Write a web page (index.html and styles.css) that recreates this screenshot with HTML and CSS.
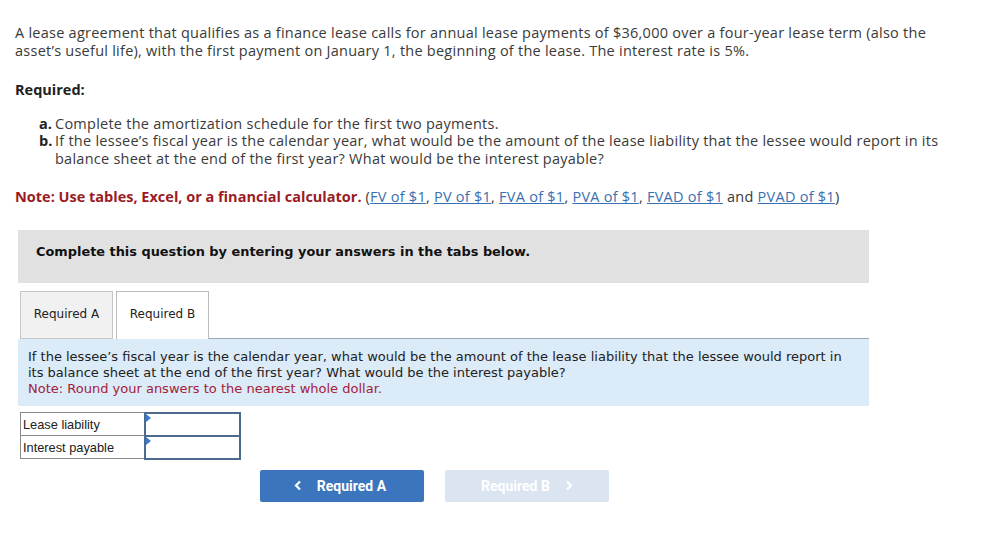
FILE: index.html
```html
<!DOCTYPE html>
<html>
<head>
<meta charset="utf-8">
<link rel="stylesheet" href="styles.css">
</head>
<body>
<div class="page">
  <p class="intro">A lease agreement that qualifies as a finance lease calls for annual lease payments of $36,000 over a four-year lease term (also the asset’s useful life), with the first payment on January 1, the beginning of the lease. The interest rate is 5%.</p>
  <p class="req-title">Required:</p>
  <ol class="req-list">
    <li><b>a.</b><span>Complete the amortization schedule for the first two payments.</span></li>
    <li><b>b.</b><span>If the lessee’s fiscal year is the calendar year, what would be the amount of the lease liability that the lessee would report in its balance sheet at the end of the first year? What would be the interest payable?</span></li>
  </ol>
  <p class="note"><b>Note: Use tables, Excel, or a financial calculator.</b> (<a href="#">FV of $1</a>, <a href="#">PV of $1</a>, <a href="#">FVA of $1</a>, <a href="#">PVA of $1</a>, <a href="#">FVAD of $1</a> and <a href="#">PVAD of $1</a>)</p>

  <div class="question">
    <div class="banner">Complete this question by entering your answers in the tabs below.</div>
    <div class="tabs">
      <div class="tab">Required A</div>
      <div class="tab active">Required B</div>
      <div class="tab-fill"></div>
    </div>
    <div class="prompt">
      <div>If the lessee’s fiscal year is the calendar year, what would be the amount of the lease liability that the lessee would report in its balance sheet at the end of the first year? What would be the interest payable?</div>
      <div class="prompt-note">Note: Round your answers to the nearest whole dollar.</div>
    </div>
    <table class="answers">
      <tr><td class="label">Lease liability</td><td class="input"><span class="flag"></span></td></tr>
      <tr><td class="label">Interest payable</td><td class="input"><span class="flag"></span></td></tr>
    </table>
    <div class="nav">
      <button class="btn prev"><svg width="8" height="11" viewBox="0 0 8 11"><path d="M6 1.5 L2 5.5 L6 9.5" fill="none" stroke="#fff" stroke-width="2.2"/></svg><span>Required A</span></button>
      <button class="btn next"><span>Required B</span><svg width="8" height="11" viewBox="0 0 8 11"><path d="M2 1.5 L6 5.5 L2 9.5" fill="none" stroke="#fff" stroke-width="2.2"/></svg></button>
    </div>
  </div>
</div>
</body>
</html>
```
FILE: styles.css
```css
html, body { margin: 0; padding: 0; background: #fff; }
.page {
  padding: 24px 0 0 15px;
  font-family: "Open Sans", "Lato", sans-serif;
  font-size: 14.5px;
  letter-spacing: 0.25px;
  color: #3a3a3a;
  width: 935px;
}
.intro { margin: 0; line-height: 17.5px; }
.req-title { margin: 22px 0 0; font-weight: bold; line-height: 17.5px; color: #222; letter-spacing: 0; }
.req-list { list-style: none; margin: 16px 0 0; padding: 0 0 0 24px; line-height: 17.5px; }
.req-list li { display: flex; }
.req-list b { width: 16px; flex: none; color: #222; letter-spacing: 0; }
.note { margin: 21px 0 0; line-height: 17.5px; }
.note b { color: #9b1b24; letter-spacing: 0; }
.note a { color: #3a6fb0; text-decoration: underline; }

.question { margin-top: 24px; margin-left: 3px; width: 851px; letter-spacing: 0; }
.banner {
  background: #e1e1e1;
  height: 53px;
  box-sizing: border-box;
  padding: 14px 18px 0;
  font-family: "DejaVu Sans", Verdana, sans-serif;
  font-weight: bold;
  font-size: 12.9px;
  color: #111;
  line-height: 16px;
}
.tabs { display: flex; margin-top: 8px; height: 48px; align-items: stretch; }
.tab {
  font-family: "DejaVu Sans", Verdana, sans-serif;
  font-size: 12px;
  color: #222;
  box-sizing: border-box;
  width: 93px;
  border: 1px solid #c6c6c6;
  background: #f1f1f1;
  display: flex;
  align-items: center;
  justify-content: center;
  padding-bottom: 2px;
}
.tab:first-child { margin-left: 2px; }
.tab.active { background: #fff; border-color: #bbb; border-bottom: none; margin-left: 3px; }
.tab-fill { flex: 1; border-bottom: 1px solid #9aa6b3; }
.prompt {
  background: #dcebf8;
  padding: 10px 10px 8px;
  font-family: "DejaVu Sans", Verdana, sans-serif;
  font-size: 13px;
  line-height: 16px;
  color: #222;
  height: 67px;
  box-sizing: border-box;
}
.prompt-note { color: #a3213a; }
.answers {
  border-collapse: collapse;
  margin: 6px 0 0 2px;
  font-family: "Liberation Sans", Arial, sans-serif;
  font-size: 12.8px;
  color: #222;
}
.answers td { height: 21px; padding: 0; }
.answers .label { width: 121px; border: 1px solid #8a8a8a; padding-left: 2px; }
.answers .input { width: 93px; border: 2px solid #4c6a8c; position: relative; }
.flag {
  position: absolute; left: 0; top: 0;
  width: 0; height: 0;
  border-top: 4px solid transparent;
  border-bottom: 4px solid transparent;
  border-left: 5px solid #3a7ac6;
}
.nav { display: flex; gap: 21px; margin: 10px 0 0 242px; }
.btn {
  width: 164px; height: 32px;
  border: none; border-radius: 2px;
  font-family: Roboto, "Liberation Sans", sans-serif;
  font-weight: bold;
  font-size: 14px;
  color: #fff;
  display: flex; align-items: center; justify-content: center; gap: 15px;
  padding: 0;
}
.btn.prev { background: #3a75bd; padding-right: 4px; }
.btn.next { background: #dbe5f2; }
```
